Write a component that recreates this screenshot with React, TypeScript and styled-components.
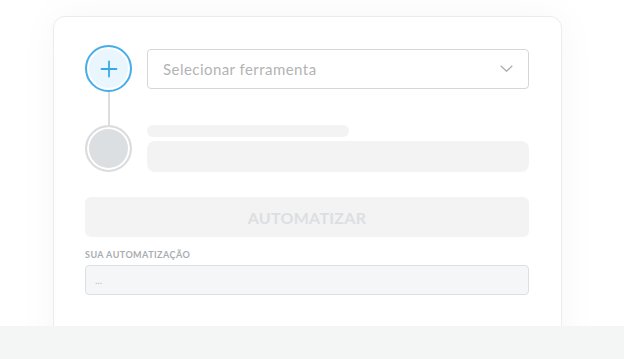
import React from "react";
import styled, { createGlobalStyle } from "styled-components";

const GlobalStyle = createGlobalStyle`
  html, body {
    margin: 0;
    padding: 0;
    background: #fff;
    font-family: "Lato", "Noto Sans", sans-serif;
  }
`;

const App = () => {
  return (
    <>
      <GlobalStyle />
      <Page>
        <Stage>
          <Card>
            <Steps>
              <Circle active>
                <svg width="20" height="20" viewBox="0 0 20 20">
                  <path d="M10 2.5v15M2.5 10h15" stroke="#3aa8e8" strokeWidth="1.8" strokeLinecap="round" />
                </svg>
              </Circle>
              <Select>
                <span>Selecionar ferramenta</span>
                <svg width="13" height="7" viewBox="0 0 13 7">
                  <path d="M0.7 0.7l5.8 5.6 5.8-5.6" fill="none" stroke="#ababab" strokeWidth="1.2" />
                </svg>
              </Select>
              <Connector />
              <div />
              <Circle />
              <Skeleton>
                <SkeletonBar width={202} height={12} />
                <SkeletonBar height={31} />
              </Skeleton>
            </Steps>
            <Button>AUTOMATIZAR</Button>
            <Label>SUA AUTOMATIZAÇÃO</Label>
            <Output>...</Output>
          </Card>
        </Stage>
        <Footer />
      </Page>
    </>
  );
};

const Page = styled.div`
  width: 624px;
  height: 359px;
  display: flex;
  flex-direction: column;
  overflow: hidden;
`;

const Stage = styled.div`
  height: 326px;
  overflow: hidden;
  padding: 16px 0 0 53px;
  box-sizing: border-box;
`;

const Card = styled.div`
  width: 509px;
  height: 360px;
  box-sizing: border-box;
  border: 1px solid #ececec;
  border-radius: 12px;
  background: #fff;
  box-shadow: 0 0 40px rgba(0, 0, 0, 0.04);
  padding: 28px 32px 0 31px;
`;

const Steps = styled.div`
  display: grid;
  grid-template-columns: 47px 1fr;
  column-gap: 15px;
  align-items: center;
`;

const Circle = styled.div<{ active?: boolean }>`
  width: 47px;
  height: 47px;
  box-sizing: border-box;
  border-radius: 50%;
  border: 2px solid ${({ active }) => (active ? "#45aeea" : "#dcdcdc")};
  box-shadow: inset 0 0 0 2px #fff;
  background: ${({ active }) => (active ? "#eaf6fe" : "#dcdfe2")};
  display: flex;
  align-items: center;
  justify-content: center;
`;

const Select = styled.div`
  height: 40px;
  box-sizing: border-box;
  border: 1px solid #d6d6d6;
  border-radius: 4px;
  display: flex;
  align-items: center;
  justify-content: space-between;
  padding: 0 15px 0 15px;
  font-size: 15px;
  letter-spacing: 0.45px;
  color: #b3b3b3;
`;

const Connector = styled.div`
  width: 2px;
  height: 33px;
  background: #dddddd;
  justify-self: center;
`;

const Skeleton = styled.div`
  display: flex;
  flex-direction: column;
  gap: 4px;
  align-self: start;
`;

const SkeletonBar = styled.div<{ width?: number; height: number }>`
  width: ${({ width }) => (width ? `${width}px` : "100%")};
  height: ${({ height }) => height}px;
  border-radius: ${({ height }) => (height > 20 ? 8 : 6)}px;
  background: #f3f3f3;
`;

const Button = styled.div`
  margin-top: 25px;
  height: 40px;
  border-radius: 6px;
  background: #f3f3f3;
  display: flex;
  align-items: center;
  justify-content: center;
  font-size: 16px;
  font-weight: 700;
  color: #dcdfe2;
  letter-spacing: 0.3px;
`;

const Label = styled.div`
  margin-top: 12px;
  font-size: 9px;
  font-weight: 700;
  letter-spacing: 0.45px;
  color: #a9adb2;
  line-height: 11px;
`;

const Output = styled.div`
  margin-top: 5px;
  height: 30px;
  box-sizing: border-box;
  border: 1px solid #dde0e3;
  border-radius: 4px;
  background: #f5f6f8;
  padding: 0 9px;
  display: flex;
  align-items: center;
  font-size: 10px;
  color: #b5b9bd;
`;

const Footer = styled.div`
  flex: 1;
  background: #f4f5f5;
`;

export default App;
